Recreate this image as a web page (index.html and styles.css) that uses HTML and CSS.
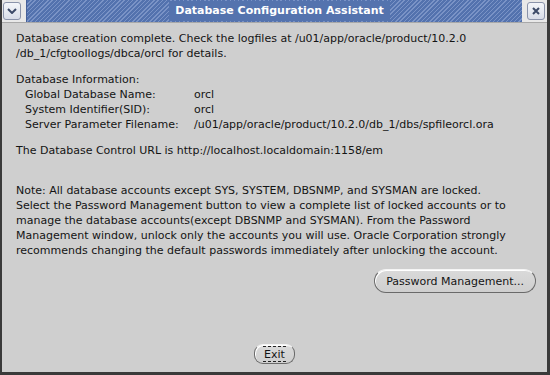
FILE: index.html
```html
<!DOCTYPE html>
<html lang="en">
<head>
  <meta charset="UTF-8">
  <title>Database Configuration Assistant</title>
  <link rel="stylesheet" href="styles.css">
</head>
<body>
  <div class="window">
    <div class="titlebar">
      <button class="tb-btn menu-btn">
        <svg width="10" height="6" viewBox="0 0 10 6"><path d="M1 1 L5 5 L9 1" fill="none" stroke="#3c4a68" stroke-width="2"/></svg>
      </button>
      <div class="title-strip">
        <span class="title">Database Configuration Assistant</span>
      </div>
      <button class="tb-btn close-btn">
        <svg width="8" height="8" viewBox="0 0 8 8"><path d="M1 1 L7 7 M7 1 L1 7" fill="none" stroke="#3c4a68" stroke-width="2"/></svg>
      </button>
    </div>

    <div class="content">
      <p class="block">Database creation complete. Check the logfiles at /u01/app/oracle/product/10.2.0<br>/db_1/cfgtoollogs/dbca/orcl for details.</p>

      <div class="block">
        <div>Database Information:</div>
        <div class="info-row"><span class="label">Global Database Name:</span><span>orcl</span></div>
        <div class="info-row"><span class="label">System Identifier(SID):</span><span>orcl</span></div>
        <div class="info-row"><span class="label">Server Parameter Filename:</span><span>/u01/app/oracle/product/10.2.0/db_1/dbs/spfileorcl.ora</span></div>
      </div>

      <p class="block url">The Database Control URL is http://localhost.localdomain:1158/em</p>

      <p class="block note">Note: All database accounts except SYS, SYSTEM, DBSNMP, and SYSMAN are locked.<br>Select the Password Management button to view a complete list of locked accounts or to<br>manage the database accounts(except DBSNMP and SYSMAN). From the Password<br>Management window, unlock only the accounts you will use. Oracle Corporation strongly<br>recommends changing the default passwords immediately after unlocking the account.</p>

      <div class="actions">
        <button class="pill">Password Management...</button>
      </div>

      <div class="footer">
        <button class="pill exit"><span class="focus">Exit</span></button>
      </div>
    </div>
  </div>
</body>
</html>
```

FILE: styles.css
```css
body {
  margin: 0;
  background: #cfcfcf;
  font-family: "DejaVu Sans", sans-serif;
}

.window {
  width: 550px;
  height: 375px;
  box-sizing: border-box;
  display: flex;
  flex-direction: column;
  background: #cfcfcf;
  border-left: 2px solid #3a3a3a;
  border-right: 3px solid #3a3a3a;
  border-bottom: 3px solid #3a3a3a;
}

.titlebar {
  height: 22px;
  display: flex;
  align-items: center;
  gap: 5px;
  padding: 0 2px 0 1px;
  background: #e8e8e8;
  border-bottom: 1px solid #a8a8a8;
}

.tb-btn {
  width: 18px;
  height: 18px;
  padding: 0;
  display: flex;
  align-items: center;
  justify-content: center;
  background: linear-gradient(#f4f6fa, #d8dde8);
  border: 1px solid #8a93aa;
  border-radius: 3px;
}

.title-strip {
  flex: 1;
  height: 22px;
  display: flex;
  align-items: center;
  justify-content: center;
  padding-left: 10px;
  background: repeating-linear-gradient(-45deg, #5372ae 0 2px, #7a93c6 2px 3px);
  border-left: 1px solid #45609a;
}

.title {
  background: #5473ae;
  color: #fff;
  font-weight: bold;
  font-size: 11px;
  padding: 0 6px;
  line-height: 20px;
}

.content {
  flex: 1;
  display: flex;
  flex-direction: column;
  padding: 8px 0 8px 14px;
  font-size: 11px;
  line-height: 15px;
  color: #141414;
  white-space: nowrap;
}

.block {
  margin: 0 0 11px;
}

.info-row {
  display: flex;
  padding-left: 9px;
}

.label {
  width: 169px;
}

.url {
  margin-bottom: 25px;
}

.note {
  margin-bottom: 11px;
}

.actions {
  display: flex;
  justify-content: flex-end;
  padding-right: 11px;
}

.pill {
  font-family: "DejaVu Sans", sans-serif;
  font-size: 11px;
  color: #141414;
  height: 24px;
  padding: 0 11px;
  background: linear-gradient(#dadada, #cfcfcf);
  border: 1px solid #6a6a6a;
  border-top-color: #f4f4f4;
  border-radius: 12px;
  box-shadow: inset 1px 1px 0 #ffffff;
}

.footer {
  margin-top: auto;
  display: flex;
  justify-content: center;
  padding-right: 14px;
}

.exit {
  height: 20px;
  padding: 0 8px;
  border-radius: 9px;
}

.focus {
  border-top: 1px dashed #222;
  border-bottom: 1px dashed #222;
  padding: 1px 1px 0;
}
```
